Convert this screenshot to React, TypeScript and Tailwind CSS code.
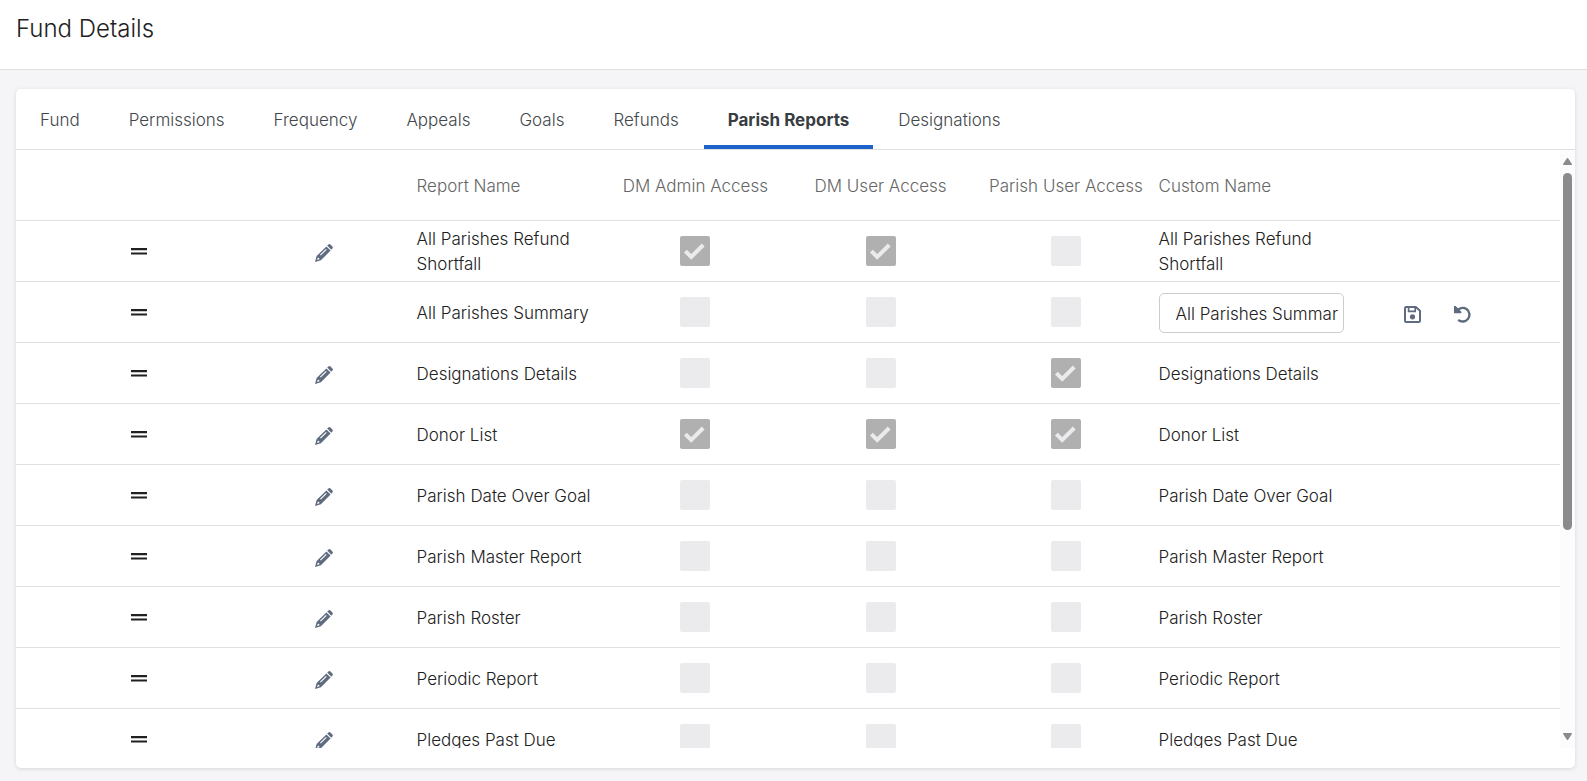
import { useState } from 'react';
import { clsx } from 'clsx';

const TABS = ['Fund', 'Permissions', 'Frequency', 'Appeals', 'Goals', 'Refunds', 'Parish Reports', 'Designations'];

interface Report {
    name: string;
    admin?: boolean;
    user?: boolean;
    parish?: boolean;
    editing?: boolean;
}

const REPORTS: Report[] = [
    { name: 'All Parishes Refund Shortfall', admin: true, user: true },
    { name: 'All Parishes Summary', editing: true },
    { name: 'Designations Details', parish: true },
    { name: 'Donor List', admin: true, user: true, parish: true },
    { name: 'Parish Date Over Goal' },
    { name: 'Parish Master Report' },
    { name: 'Parish Roster' },
    { name: 'Periodic Report' },
    { name: 'Pledges Past Due' },
];

function PencilIcon() {
    return (
        <svg viewBox="0 0 18 18" className="block size-[18px]" fill="#5f6b7f">
            <path d="M12.2 1.6 13.4.5q1.1-.9 2.1.1l1.9 1.9q.9 1 0 2.1l-1.1 1.2Z" />
            <path fillRule="evenodd" d="M11.4 2.4 15.6 6.6 5.9 16.3 0 18 1.6 12.1ZM10.9 4.9 5 10.8l.8.8 5.9-5.9ZM2.9 13.7l-.9 2.4 2.4-.9-.2-1.1Z" />
        </svg>
    );
}

function SaveIcon() {
    return (
        <svg viewBox="0 0 17 17" className="block size-[17px]" fill="none" stroke="#5f6b7f" strokeWidth="2">
            <path d="M2.2 1h9.6L16 4.8v10q0 1.2-1.2 1.2H2.2Q1 16 1 14.8V2.2Q1 1 2.2 1Z" strokeLinejoin="round" />
            <path d="M4.6 1v4.4h6.6V1" strokeWidth="1.7" />
            <circle cx="8.5" cy="10.8" r="2.6" fill="#5f6b7f" stroke="none" />
        </svg>
    );
}

function UndoIcon() {
    return (
        <svg viewBox="0 0 17 17" className="block size-[17px]" fill="none" stroke="#5f6b7f" strokeWidth="2.4">
            <path d="M2.8 5.2A6.8 6.8 0 1 1 4.2 13.9" />
            <path d="M0 0h1.6l5.8 5.8v1.4H0Z" fill="#5f6b7f" stroke="none" />
        </svg>
    );
}

function AccessBox({ label, checked }: { label: string; checked?: boolean }) {
    return (
        <label className="relative mx-auto block size-[30px]">
            <input
                type="checkbox"
                aria-label={label}
                defaultChecked={checked}
                disabled
                className="block size-[30px] appearance-none rounded-[2px] bg-[#ebebed] checked:bg-[#b0b0b0]"
            />
            {checked && (
                <svg viewBox="0 0 30 30" className="pointer-events-none absolute inset-0 size-[30px]" fill="none" stroke="#ebebed" strokeWidth="4">
                    <path d="M5.4 15.2 11.2 21 23.2 9" />
                </svg>
            )}
        </label>
    );
}

function ReportRow({ report }: { report: Report }) {
    const [customName, setCustomName] = useState(report.name);

    return (
        <tr className="h-[61px] border-b border-[#dedfe1]">
            <td>
                <button aria-label={`Move ${report.name}`} className="mx-auto mt-[2px] block size-6">
                    <svg viewBox="0 0 24 24" className="block size-6" fill="#212121">
                        <path d="M4 8h16v2.2H4zM4 12.4h16v2.2H4z" />
                    </svg>
                </button>
            </td>
            <td>
                {!report.editing && (
                    <button aria-label={`Edit ${report.name}`} className="mx-auto mt-1 block">
                        <PencilIcon />
                    </button>
                )}
            </td>
            <td className="pt-[3px] pl-[30px]">{report.name}</td>
            <td><AccessBox label={`${report.name}: DM admin`} checked={report.admin} /></td>
            <td><AccessBox label={`${report.name}: DM user`} checked={report.user} /></td>
            <td><AccessBox label={`${report.name}: parish user`} checked={report.parish} /></td>
            <td className="pt-[3px]">
                {report.editing ? (
                    <input
                        type="text"
                        aria-label="Custom name"
                        value={customName}
                        onChange={(e) => setCustomName(e.target.value)}
                        className="block h-10 w-full rounded-[5px] border border-[#cccccf] bg-white pt-[2px] pr-1 pl-4"
                    />
                ) : customName}
            </td>
            <td>
                {report.editing && (
                    <div className="mt-[6px] flex gap-[33px] pl-[60px]">
                        <button aria-label="Save"><SaveIcon /></button>
                        <button aria-label="Undo"><UndoIcon /></button>
                    </div>
                )}
            </td>
        </tr>
    );
}

export default function App() {
    const [activeTab, setActiveTab] = useState('Parish Reports');

    return (
        <div className="flex h-screen flex-col bg-[#f5f5f8] font-['Inter',sans-serif] text-[17px] leading-[25px] font-light text-[#212121]">
            <header className="h-[70px] shrink-0 border-b border-[#dedfe1] bg-white px-4 pt-[13px]">
                <h1 className="text-[24px] leading-8">Fund Details</h1>
            </header>

            <main className="flex min-h-0 flex-1 flex-col pt-[19px] pr-3 pb-[13px] pl-4">
                <section className="flex min-h-0 flex-1 flex-col rounded-[5px] bg-white pb-5 shadow-[0_1px_4px_rgba(0,0,0,0.12)]">
                    {/* Tabs */}
                    <nav className="flex h-[61px] shrink-0 gap-px border-b border-[#dedfe1]">
                        {TABS.map((tab) => (
                            <button
                                key={tab}
                                onClick={() => setActiveTab(tab)}
                                className={clsx(
                                    'border-b-4 px-6 pt-[6px] whitespace-nowrap',
                                    tab === activeTab ? 'border-[#1e63c9] font-bold text-[#383d42]' : 'border-transparent text-[#42474c]',
                                )}
                            >
                                {tab}
                            </button>
                        ))}
                    </nav>

                    <div className="flex min-h-0 flex-1">
                        <div className="min-w-0 flex-1 overflow-y-auto [scrollbar-width:none]">
                            <table className="w-full table-fixed border-collapse text-left">
                                <thead>
                                    <tr className="h-[70px] border-b border-[#dedfe1] whitespace-nowrap text-[#666666] [&>th]:pt-[3px] [&>th]:font-light">
                                        <th className="w-[15.9%]" />
                                        <th className="w-[8.1%]" />
                                        <th className="w-[14%] pl-[30px]">Report Name</th>
                                        <th className="w-[12%] text-center">DM Admin Access</th>
                                        <th className="w-[12%] text-center">DM User Access</th>
                                        <th className="w-[12%] text-center">Parish User Access</th>
                                        <th className="w-[12%]">Custom Name</th>
                                        <th />
                                    </tr>
                                </thead>
                                <tbody>
                                    {REPORTS.map((report) => (
                                        <ReportRow key={report.name} report={report} />
                                    ))}
                                </tbody>
                            </table>
                        </div>

                        {/* Scroll bar */}
                        <div className="flex w-[15px] shrink-0 flex-col items-center bg-[#fcfcfc] py-2">
                            <svg viewBox="0 0 9 7" className="h-[7px] w-[9px] shrink-0" fill="#8b8b8b">
                                <path d="M3.7.6q.8-1.2 1.6 0L8.9 6q.3 1-.7 1H.8Q-.2 7 .1 6Z" />
                            </svg>
                            <div className="my-2 w-[9px] flex-1">
                                <div className="h-[64.6%] rounded-full bg-[#8b8b8b]" />
                            </div>
                            <svg viewBox="0 0 9 7" className="h-[7px] w-[9px] shrink-0" fill="#8b8b8b">
                                <path d="M3.7 6.4q.8 1.2 1.6 0L8.9 1Q9.2 0 8.2 0H.8Q-.2 0 .1 1Z" />
                            </svg>
                        </div>
                    </div>
                </section>
            </main>
        </div>
    );
}
